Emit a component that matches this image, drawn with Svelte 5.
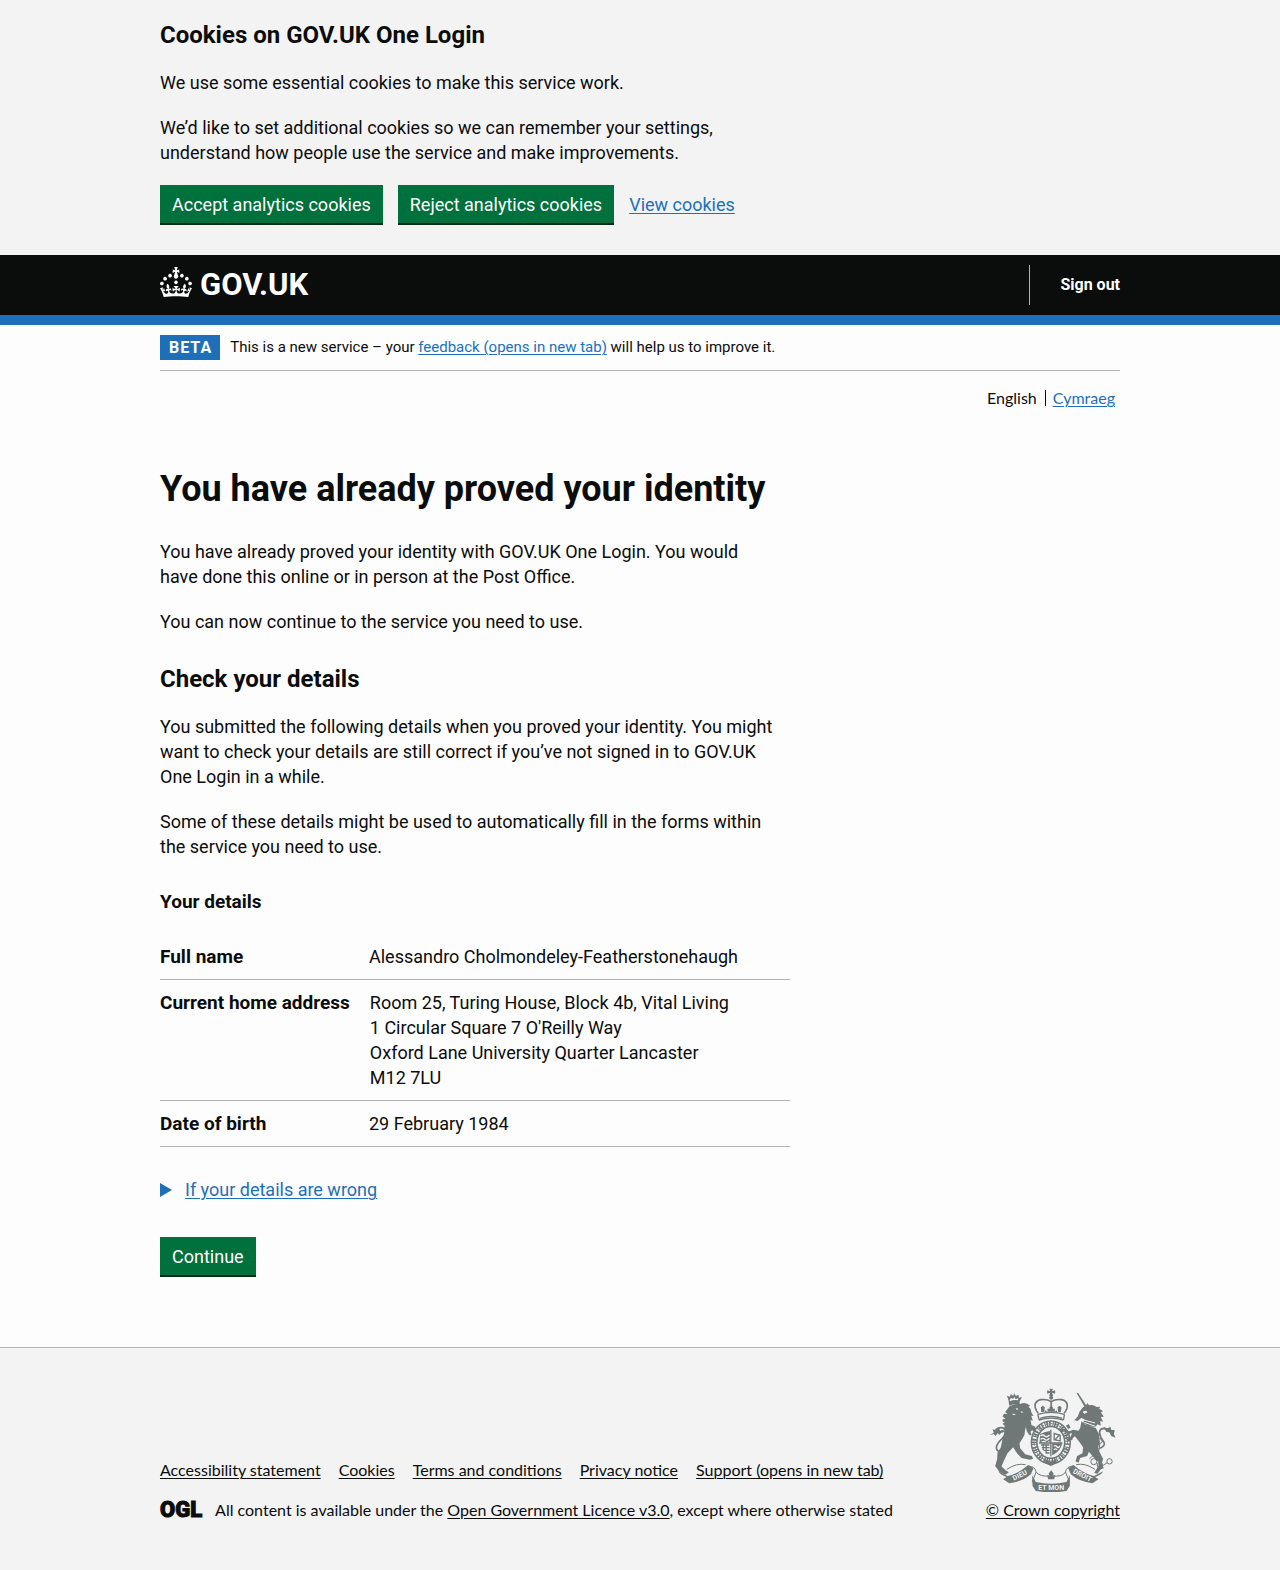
<script>
  const details = [
    { term: 'Full name', lines: ['Alessandro Cholmondeley-Featherstonehaugh'] },
    {
      term: 'Current home address',
      lines: [
        'Room 25, Turing House, Block 4b, Vital Living',
        "1 Circular Square 7 O'Reilly Way",
        'Oxford Lane University Quarter Lancaster',
        'M12 7LU'
      ]
    },
    { term: 'Date of birth', lines: ['29 February 1984'] }
  ];

  const footerLinks = [
    'Accessibility statement',
    'Cookies',
    'Terms and conditions',
    'Privacy notice',
    'Support (opens in new tab)'
  ];
</script>

<section class="cookies" aria-label="Cookies on GOV.UK One Login">
  <div class="container">
    <div class="column">
      <h2 class="heading-m">Cookies on GOV.UK One Login</h2>
      <p>We use some essential cookies to make this service work.</p>
      <p>We’d like to set additional cookies so we can remember your settings, understand how people use the service and make improvements.</p>
    </div>
    <div class="button-group">
      <button class="button" type="button">Accept analytics cookies</button>
      <button class="button" type="button">Reject analytics cookies</button>
      <a href="#cookies">View cookies</a>
    </div>
  </div>
</section>

<header class="header">
  <div class="container header-row">
    <a class="logo" href="#home">
      <svg width="32" height="30" viewBox="0 0 32 30" fill="currentColor" aria-hidden="true">
        <path d="M22.6 10.4c-1 .4-2-.1-2.4-1-.4-.9.1-2 1-2.4.9-.4 2 .1 2.4 1s-.1 2-1 2.4m-5.9 6.7c-.9.4-2-.1-2.4-1-.4-.9.1-2 1-2.4.9-.4 2 .1 2.4 1s-.1 2-1 2.4m10.8-3.7c-1 .4-2-.1-2.4-1-.4-.9.1-2 1-2.4.9-.4 2 .1 2.4 1s0 2-1 2.4m3.3 4.8c-1 .4-2-.1-2.4-1-.4-.9.1-2 1-2.4.9-.4 2 .1 2.4 1s-.1 2-1 2.4M17 4.7l2.3 1.2V2.5l-2.3.7-.2-.2.9-3h-3.4l.9 3-.2.2c-.1.1-2.3-.7-2.3-.7v3.4L15 4.7c.1.1.1.2.2.2l-1.3 4c-.1.2-.1.4-.1.6 0 1.1.8 2 1.9 2.2h.7c1-.2 1.9-1.1 1.9-2.1 0-.2 0-.4-.1-.6l-1.3-4c-.1-.2 0-.2.1-.3m-7.6 5.7c.9.4 2-.1 2.4-1 .4-.9-.1-2-1-2.4-.9-.4-2 .1-2.4 1s0 2 1 2.4m-5 3c.9.4 2-.1 2.4-1 .4-.9-.1-2-1-2.4-.9-.4-2 .1-2.4 1s.1 2 1 2.4m-3.2 4.8c.9.4 2-.1 2.4-1 .4-.9-.1-2-1-2.4-.9-.4-2 .1-2.4 1s0 2 1 2.4m14.8 11c4.4 0 8.6.3 12.3.8 1.1-4.5 2.4-7 3.7-8.8l-2.5-.9c.2 1.3.3 1.9 0 2.7-.4-.4-.8-1.1-1.1-2.3l-1.2 4c.7-.5 1.3-.8 2-.9-1.1 2.5-2.6 3.1-3.5 3-1.1-.2-1.7-1.2-1.5-2.1.3-1.2 1.5-1.5 2.1-.1 1.1-2.3-.8-3-2-2.3 1.9-1.9 2.1-3.5.6-5.6-2.1 1.6-2.1 3.2-1.2 5.5-1.2-1.4-3.2-.6-2.5 1.6.9-1.4 2.1-.5 1.9.8-.2 1.1-1.7 2.1-3.5 1.9-2.7-.2-2.9-2.1-2.9-3.6.7-.1 1.9.5 2.9 1.9l.4-4.3c-1.1 1.1-2.1 1.4-3.2 1.4.4-1.2 2.1-3 2.1-3h-5.4s1.7 1.9 2.1 3c-1.1 0-2.1-.2-3.2-1.4l.4 4.3c1-1.4 2.2-2 2.9-1.9-.1 1.5-.2 3.4-2.9 3.6-1.9.2-3.4-.8-3.5-1.9-.2-1.3 1-2.2 1.9-.8.7-2.3-1.2-3-2.5-1.6.9-2.2.9-3.9-1.2-5.5-1.5 2-1.3 3.7.6 5.6-1.2-.7-3.1 0-2 2.3.6-1.4 1.8-1.1 2.1.1.2.9-.3 1.9-1.5 2.1-.9.2-2.4-.5-3.5-3 .6 0 1.2.3 2 .9l-1.2-4c-.3 1.1-.7 1.9-1.1 2.3-.3-.8-.2-1.4 0-2.7l-2.9.9C1.3 23 2.6 25.5 3.7 30c3.7-.5 7.9-.8 12.3-.8" />
      </svg>
      <span>GOV.UK</span>
    </a>
    <nav class="account" aria-label="Account">
      <a href="#sign-out">Sign out</a>
    </nav>
  </div>
</header>

<div class="container">
  <div class="phase">
    <strong class="tag">BETA</strong>
    <span>This is a new service – your <a href="#feedback">feedback (opens in new tab)</a> will help us to improve it.</span>
  </div>
  <nav class="language" aria-label="Language">
    <span>English</span>
    <a href="#cy">Cymraeg</a>
  </nav>

  <main class="column">
    <h1>You have already proved your identity</h1>
    <p>You have already proved your identity with GOV.UK One Login. You would have done this online or in person at the Post Office.</p>
    <p>You can now continue to the service you need to use.</p>

    <h2 class="heading-m section">Check your details</h2>
    <p>You submitted the following details when you proved your identity. You might want to check your details are still correct if you’ve not signed in to GOV.UK One Login in a while.</p>
    <p>Some of these details might be used to automatically fill in the forms within the service you need to use.</p>

    <h3>Your details</h3>
    <dl>
      {#each details as row}
        <div class="row">
          <dt>{row.term}</dt>
          <dd>{#each row.lines as line}<span>{line}</span>{/each}</dd>
        </div>
      {/each}
    </dl>

    <details>
      <summary>
        <svg width="12" height="14" viewBox="0 0 12 14" aria-hidden="true"><path d="M0 0 12 7 0 14z" fill="currentColor" /></svg>
        <span>If your details are wrong</span>
      </summary>
    </details>

    <button class="button" type="button">Continue</button>
  </main>
</div>

<footer>
  <div class="container footer-row">
    <div class="footer-main">
      <ul>
        {#each footerLinks as label}
          <li><a href="#footer">{label}</a></li>
        {/each}
      </ul>
      <div class="licence">
        <strong class="ogl">OGL</strong>
        <span>All content is available under the <a href="#ogl">Open Government Licence v3.0</a>, except where otherwise stated</span>
      </div>
    </div>
    <a class="crest" href="#copyright">
      <svg width="127" height="104" viewBox="60 50 380 312" fill="#6f7777" stroke="none" aria-hidden="true">
        <!-- royal crown -->
        <path d="M241 52h10l-2 8 9-3v10l-9-3 3 10h-12l3-10-9 3V57l9 3z" />
        <circle cx="246" cy="79" r="6" />
        <g fill="none" stroke="#6f7777" stroke-width="5">
          <path d="M207 126c-15-20-12-37 8-41 15-2 25 2 31 6 6-4 16-8 31-6 20 4 23 21 8 41" />
          <path d="M246 88v30" />
          <path d="M206 129q40-12 80 0M209 146q37-11 74 0M206 129l4 17M286 129l-3 17" stroke-width="4" />
        </g>
        <path d="M212 139q34-11 68 0l-1 4q-33-10-66 0z" />
        <path d="M241 106h10v6h6v9h-22v-9h6zM215 108l6-5 6 5-2 14h-9zM265 108l6-5 6 5-2 14h-8zM230 116l4 7h-8zM261 116l4 7h-8z" />
        <!-- garter -->
        <ellipse cx="245" cy="213" rx="50" ry="56" fill="none" stroke="#6f7777" stroke-width="21" />
        <ellipse cx="245" cy="213" rx="50" ry="56" fill="none" stroke="#f3f3f3" stroke-width="12" stroke-dasharray="3 5 6 3 2 5" />
        <ellipse cx="245" cy="213" rx="50" ry="56" fill="none" stroke="#6f7777" stroke-width="3" stroke-dasharray="7 6" />
        <!-- shield -->
        <ellipse cx="245" cy="213" rx="36" ry="42" fill="#f3f3f3" />
        <path d="M213 188q15-8 30-9v35h-32zM249 216h30q-4 24-30 36z" />
        <g fill="none" stroke="#f3f3f3" stroke-width="4">
          <path d="M214 194q8-6 13 0t14-3M214 204q8-6 13 0t14-3M217 213q8-6 13 0t10-3" />
          <path d="M254 225q6-5 9 1t9-2M254 235q6-5 9 1" />
        </g>
        <g fill="none" stroke="#6f7777" stroke-width="4">
          <path d="M245 175v80M210 215h70M255 186l18 6v17l-18-4zM258 205l12-14M216 221h25M218 229h23M223 237h18M229 245h12M231 218v28M222 218v18" />
        </g>
        <path d="M229 264l16 7 16-7 2 12-18 8-18-8z" />
        <!-- lion -->
        <path d="M118 86l-5-13 9 3 3-8 7 6 3-8 5 8 8-4 1 9 9-2-7 14 1 8q-17-4-32 4z" />
        <path d="M122 86l3-7 7 4 3-7 4 7 8-2 0 6q-14-3-25 3z" fill="#f3f3f3" />
        <path d="M121 105q14-10 32-7 16-8 30 5l-5 4q9 5 8 15l7 12-7-1 5 15-7-2 3 16q13 2 14 14l-5 6-7-5-5 4 3 10-6 1-8-12-3-13q-3 11-4 23-7 14-15 26l2 15q8 9 15 18l20 5 4 8-9 3-26-5-14-15-11-17-17 18-11 23-7 16 12 12 10 6-10 7-18-8-13-18 6-20 1-20 10-16 5-24 7-26 5-20-6 5-6-6 8-4-7-2-1-7 9-1-9-8 5-8 10 1-7-6z" />
        <path d="M117 150l-10 12-4 16 6-3 2-9 9-6z" />
        <path d="M139 112q6-3 9 2l-6 1zM154 120l9 2-6 3zM128 127l12 1-6 4z" fill="#f3f3f3" />
        <path d="M102 237q-22 7-20-10 2-12 17-25 18-19 8-29-13-9-28 3" fill="none" stroke="#6f7777" stroke-width="5" />
        <path d="M61 191l13-7-4-10 12 3 7-9 4 10q14-6 18 8-4-5-14-2l-7 7-4-6-7 9-5-6z" />
        <!-- unicorn -->
        <path d="M322 64l5 1 26 40-6 3z" />
        <path d="M326 135l5-14 11-14 8-2 4-10 6 7q13-4 22 5l11-1-3 6 12 8-7 3 9 13-9 1 7 14-9-2 2 14-10-4-6 8-21-2-16-10 4-11-10-4-11 9-9-2z" />
        <path d="M342 122l8-3 3 4-7 3zM340 145l38 10M345 153l34 12" fill="#f3f3f3" stroke="#f3f3f3" stroke-width="3" />
        <path d="M337 150l12 10 31 10 9 18 3 25-6 17 7 16 9 17-5 13 7 15-9 3-10 13-10-2 12-20 2-12-14-13-16-19-5 13-21 6-5 14-9-4 5-16 16-8 2-18-13-18-12-15-11 10-9 5-7-8 13-3 6-13-14 2-12-9-8 3-1-10 13 1 13 7 13-5 15 3 5-8z" />
        <path d="M297 172l-7-9 9-5 5 12zM309 197l-10 3 2 9 9-4z" />
        <path d="M388 232q23-8 16-20-12-14-13-28 1-13 14-13 14 3 24 17" fill="none" stroke="#6f7777" stroke-width="5" />
        <path d="M403 168l12 3 9-5 2 9 11 2-3 10 5 12-13-5-5-11-9-1z" />
        <!-- chain -->
        <g fill="none" stroke="#6f7777" stroke-width="3">
          <circle cx="392" cy="209" r="7" />
          <circle cx="374" cy="271" r="9" />
          <circle cx="392" cy="281" r="8" />
          <circle cx="421" cy="270" r="8" />
          <path d="M399 284l15-10M392 216l-3 22-28 24" />
        </g>
        <!-- ribbon -->
        <path d="M88 300l27 14q31-6 62-33l16 10-8 18q-24 22-65 27l-18-12 10-7q-19-6-24-17z" />
        <path d="M402 300l-27 14q-31-6-62-33l-16 10 8 18q24 22 65 27l18-12-10-7q19-6 24-17z" />
        <g fill="none" stroke="#6f7777" stroke-width="3">
          <path d="M178 284q20 1 23 18l-12 30M312 284q-20 1-23 18l12 30M201 302q9 15 45 12 36 3 43-12M113 294q30-20 56-14M377 294q-30-20-56-14" />
        </g>
        <path d="M189 312l11 20q46 10 92 0l10-20 0 32-10 15q-46 8-92 0l-10-15z" />
        <path d="M246 297l8 10-4 6 8-2-3 13h-18l-3-13 8 2-4-6z" />
        <g class="motto" fill="#f3f3f3" text-anchor="middle">
          <text transform="translate(155 318) rotate(-27)">DIEU</text>
          <text transform="translate(246 356)">ET MON</text>
          <text transform="translate(337 318) rotate(27)">DROIT</text>
        </g>
      </svg>
      <span>© Crown copyright</span>
    </a>
  </div>
</footer>

<style>
  :global(body) {
    margin: 0;
    background: #fdfdfd;
    color: #0b0c0c;
    font-family: Roboto, "Liberation Sans", sans-serif;
    font-size: 18px;
    line-height: 25px;
  }
  .container {
    max-width: 960px;
    margin: 0 auto;
  }
  .column {
    max-width: 630px;
  }
  a {
    color: #1d70b8;
    text-decoration: underline;
    text-decoration-thickness: 1px;
    text-underline-offset: 2px;
  }
  h1, h2, h3, p, dl, dd, ul {
    margin: 0;
    padding: 0;
  }
  p {
    max-width: 616px;
    margin-bottom: 20px;
  }
  h1 {
    font-size: 36px;
    line-height: 40px;
    margin-bottom: 30px;
  }
  .heading-m {
    font-size: 24px;
    line-height: 30px;
    margin-bottom: 20px;
  }
  .section {
    padding-top: 10px;
  }
  h3 {
    font-size: 19px;
    padding-top: 10px;
    margin-bottom: 30px;
  }

  .cookies {
    background: #f3f3f3;
    padding: 20px 0 32px;
  }
  .button-group {
    display: flex;
    align-items: center;
    gap: 15px;
  }
  .button {
    border: 0;
    border-radius: 0;
    background: #00703c;
    color: #fff;
    box-shadow: 0 2px 0 #002d18;
    font: inherit;
    line-height: 20px;
    padding: 10px 12px 8px;
    cursor: pointer;
  }

  .header {
    background: #0b0c0c;
    border-bottom: 10px solid #1d70b8;
  }
  .header-row {
    display: flex;
    justify-content: space-between;
    align-items: center;
    height: 60px;
  }
  .logo {
    display: flex;
    align-items: center;
    gap: 8px;
    color: #fff;
    font-size: 31px;
    font-weight: 700;
    line-height: 30px;
    text-decoration: none;
  }
  .logo svg {
    margin-bottom: 6px;
  }
  .account {
    display: flex;
    border-left: 1px solid #b1b4b6;
    padding-left: 30px;
    line-height: 40px;
  }
  .account a {
    color: #fff;
    font-size: 16px;
    font-weight: 700;
    text-decoration: none;
  }

  .phase {
    display: flex;
    align-items: center;
    gap: 10px;
    padding: 10px 0;
    border-bottom: 1px solid #b1b4b6;
    font-size: 15px;
  }
  .tag {
    background: #1d70b8;
    color: #fff;
    font-size: 16px;
    letter-spacing: 1px;
    padding: 0 8px 0 9px;
  }
  .language {
    display: flex;
    justify-content: flex-end;
    align-items: center;
    padding: 17px 5px 0;
    font-family: Lato, sans-serif;
    font-size: 16px;
    line-height: 20px;
  }
  .language a {
    margin-left: 8px;
    padding-left: 8px;
    position: relative;
  }
  .language a::before {
    content: "";
    position: absolute;
    left: 0;
    top: 2px;
    bottom: 2px;
    border-left: 1px solid #0b0c0c;
  }
  main {
    padding: 61px 0 72px;
  }

  .row {
    display: flex;
    padding: 10px 0;
    border-bottom: 1px solid #b1b4b6;
  }
  .row:first-child {
    padding-top: 0;
  }
  dt {
    flex: 0 0 30%;
    padding-right: 20px;
    font-size: 19px;
    font-weight: 700;
    white-space: nowrap;
  }
  dd span {
    display: block;
  }
  details {
    margin: 30px 0 35px;
  }
  summary {
    display: flex;
    align-items: center;
    gap: 13px;
    width: fit-content;
    color: #1d70b8;
    cursor: pointer;
    list-style: none;
  }
  summary span {
    text-decoration: underline;
    text-decoration-thickness: 1px;
    text-underline-offset: 2px;
  }

  footer {
    background: #f3f3f3;
    border-top: 1px solid #b1b4b6;
    padding: 40px 0 50px;
    font-family: Lato, sans-serif;
    font-size: 16px;
    line-height: 20px;
  }
  footer a {
    color: #0b0c0c;
  }
  .footer-row {
    display: flex;
    justify-content: space-between;
    align-items: flex-end;
  }
  ul {
    display: flex;
    flex-wrap: wrap;
    gap: 8px 18px;
    margin-bottom: 20px;
    list-style: none;
  }
  .licence {
    display: flex;
    align-items: center;
    gap: 13px;
  }
  .ogl {
    font-family: Roboto, sans-serif;
    font-size: 22px;
    font-weight: 900;
    -webkit-text-stroke: 1px #0b0c0c;
  }
  .crest {
    display: flex;
    flex-direction: column;
    align-items: center;
    gap: 8px;
  }
  .motto {
    font-family: Roboto, sans-serif;
    font-size: 21px;
    font-weight: 700;
  }
</style>
